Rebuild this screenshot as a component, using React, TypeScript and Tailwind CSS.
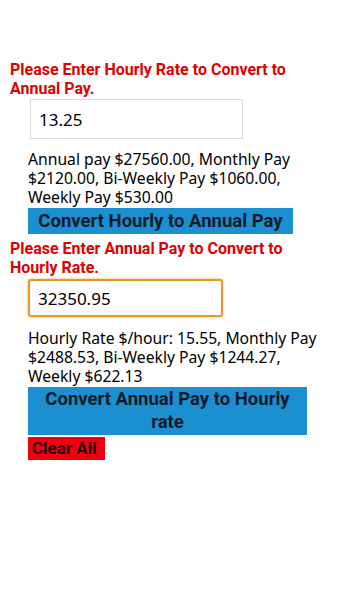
import { useState } from 'react'

export default function App() {
  const [hourly, setHourly] = useState('13.25')
  const [annual, setAnnual] = useState('32350.95')

  const heading = "w-[300px] pl-[10px] font-['Roboto',sans-serif] text-[16px] font-bold leading-[19px] text-[#e00000]"
  const result = 'ml-[28px] w-[294px] text-[15.7px] leading-[19px]'
  const blueBtn = "ml-[28px] mt-px block bg-[#1b8fcf] font-['Roboto',sans-serif] text-[18.5px] font-bold text-[#0b1a2b]"

  return (
    <div className="flex min-h-[604px] w-[340px] flex-col items-start bg-white pt-[60px] font-['Noto_Sans','DejaVu_Sans',sans-serif] text-black">
      {/* Hourly -> annual */}
      <p className={heading}>Please Enter Hourly Rate to Convert to Annual Pay.</p>
      <input
        type="text"
        value={hourly}
        onChange={(e) => setHourly(e.target.value)}
        className="ml-[30px] mt-px h-[40px] w-[213px] border border-[#dcdcdc] px-2 text-[17px] outline-none"
      />
      <p className={`${result} mt-[11px]`}>
        Annual pay $27560.00, Monthly Pay $2120.00, Bi-Weekly Pay $1060.00, Weekly Pay $530.00
      </p>
      <button className={`${blueBtn} h-[26px] w-[265px] leading-[26px]`}>Convert Hourly to Annual Pay</button>

      {/* Annual -> hourly */}
      <p className={`${heading} mt-[5px]`}>Please Enter Annual Pay to Convert to Hourly Rate.</p>
      <input
        type="text"
        value={annual}
        onChange={(e) => setAnnual(e.target.value)}
        className="ml-[28px] mt-[2px] h-[38px] w-[195px] rounded-[3px] border-2 border-[#e8962e] px-2 text-[17px] shadow-[0_0_3px_#f0b060] outline-none"
      />
      <p className={`${result} mt-[12px]`}>
        Hourly Rate $/hour: 15.55, Monthly Pay $2488.53, Bi-Weekly Pay $1244.27, Weekly $622.13
      </p>
      <button className={`${blueBtn} h-[48px] w-[279px] px-2 leading-[23px]`}>Convert Annual Pay to Hourly rate</button>
      <button className="ml-[28px] mt-[2px] h-[23px] w-[77px] bg-[#f20010] px-1 text-left font-['Roboto',sans-serif] text-[17px] font-bold leading-[23px] text-[#2a0000]">
        Clear All
      </button>
    </div>
  )
}
